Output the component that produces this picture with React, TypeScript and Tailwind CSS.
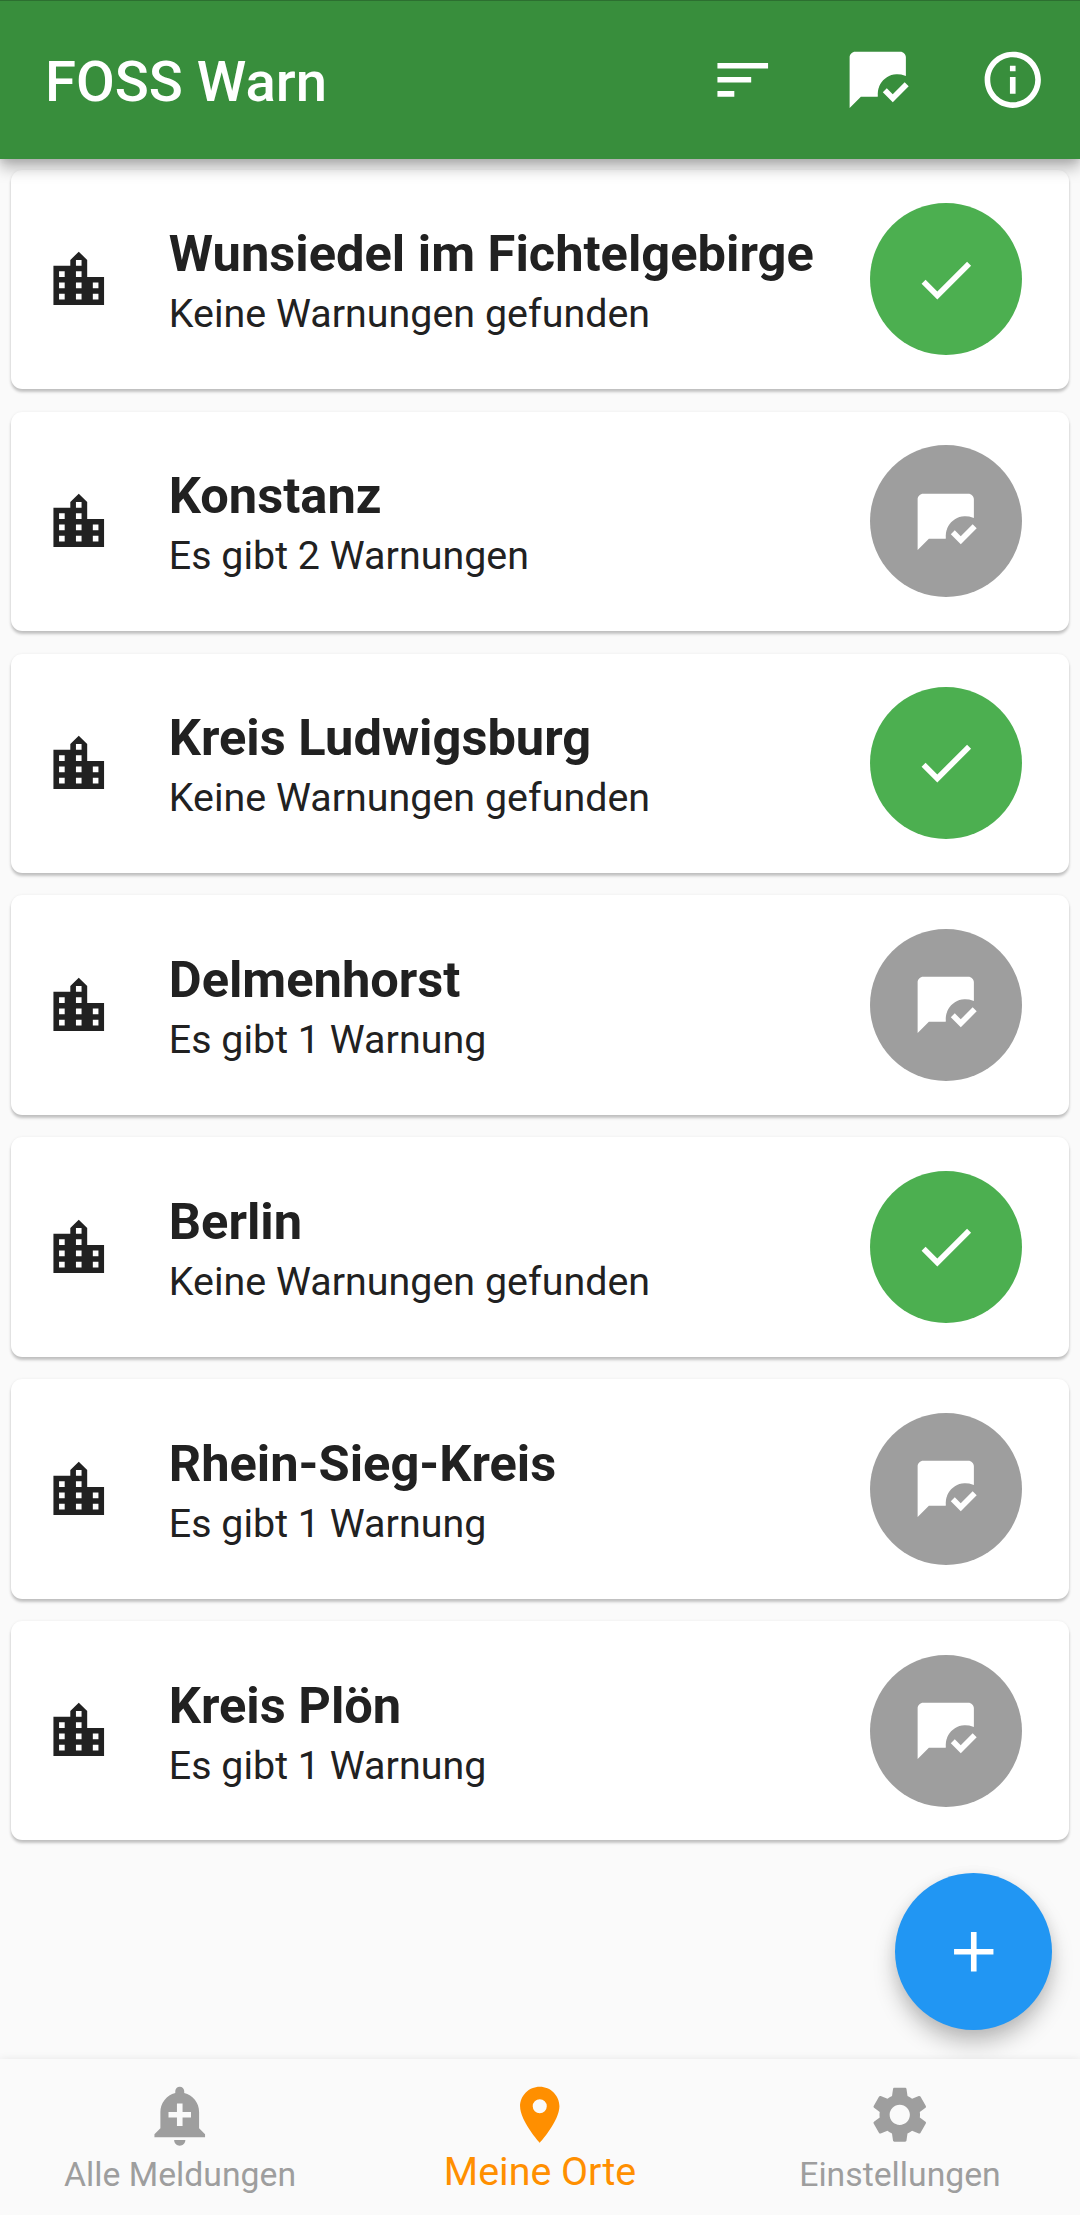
import type { IconType } from "react-icons";
import {
  MdAdd,
  MdAddAlert,
  MdCheck,
  MdInfoOutline,
  MdLocationCity,
  MdMarkChatRead,
  MdPlace,
  MdSettings,
  MdSort,
} from "react-icons/md";

const places = [
  { name: "Wunsiedel im Fichtelgebirge", warnings: 0 },
  { name: "Konstanz", warnings: 2 },
  { name: "Kreis Ludwigsburg", warnings: 0 },
  { name: "Delmenhorst", warnings: 1 },
  { name: "Berlin", warnings: 0 },
  { name: "Rhein-Sieg-Kreis", warnings: 1 },
  { name: "Kreis Plön", warnings: 1 },
];

function warningText(count: number) {
  if (count === 0) return "Keine Warnungen gefunden";
  return count === 1 ? "Es gibt 1 Warnung" : `Es gibt ${count} Warnungen`;
}

function ActionButton({ icon: Icon, label }: { icon: IconType; label: string }) {
  return (
    <button aria-label={label} className="flex size-[135px] items-center justify-center">
      <Icon className="size-[67.5px]" />
    </button>
  );
}

function PlaceCard({ name, warnings }: { name: string; warnings: number }) {
  return (
    <li className="flex h-[219.375px] items-center rounded-[11.25px] bg-white pr-[47px] pl-[33.75px] shadow-[0_3px_3px_rgba(0,0,0,0.22),0_0_3px_rgba(0,0,0,0.06)]">
      <MdLocationCity className="mt-px size-[67.5px] shrink-0" />
      <div className="min-w-0 flex-1 pt-[10.5px] pl-[56.25px] whitespace-nowrap">
        <h2 className="text-[50.625px] leading-[60px] font-bold">{name}</h2>
        <p className="text-[39.375px] leading-[60.5px] tracking-[0.03px]">{warningText(warnings)}</p>
      </div>
      <button
        aria-label={warnings === 0 ? "Keine Warnungen" : "Als gelesen markieren"}
        className={`flex size-[152px] shrink-0 items-center justify-center rounded-full text-white ${
          warnings === 0 ? "bg-[#4caf50]" : "bg-[#9e9e9e]"
        }`}
      >
        {warnings === 0 ? <MdCheck className="size-[67.5px]" /> : <MdMarkChatRead className="size-[67.5px]" />}
      </button>
    </li>
  );
}

function NavItem({ icon: Icon, label, active = false }: { icon: IconType; label: string; active?: boolean }) {
  return (
    <a
      className={`flex flex-1 flex-col items-center pt-[22.5px] whitespace-nowrap ${
        active ? "text-[#ff8f00]" : "text-[#9e9e9e]"
      }`}
    >
      <Icon className="size-[67.5px]" />
      <span className={active ? "text-[39.375px] leading-[46px]" : "pt-[6px] text-[33.75px] leading-[40px]"}>
        {label}
      </span>
    </a>
  );
}

export default function App() {
  return (
    <div className="flex h-[2215px] w-[1080px] flex-col overflow-hidden bg-[#fafafa] font-['Roboto',sans-serif] text-[#212121]">
      <header className="z-10 flex h-[158.5px] shrink-0 items-center border-t border-[#2c6f30] bg-[#388e3c] pl-[45px] text-white shadow-[0_9px_14px_rgba(0,0,0,0.27),0_3px_6px_rgba(0,0,0,0.08)]">
        <h1 className="flex-1 pt-[4px] text-[56.25px] leading-[66px] font-medium">FOSS Warn</h1>
        <ActionButton icon={MdSort} label="Sortieren" />
        <ActionButton icon={MdMarkChatRead} label="Alle als gelesen markieren" />
        <ActionButton icon={MdInfoOutline} label="Info" />
      </header>

      <main className="relative min-h-0 flex-1">
        <ul className="flex flex-col gap-[22.5px] p-[11.25px]">
          {places.map((place) => (
            <PlaceCard key={place.name} {...place} />
          ))}
        </ul>
        <button
          aria-label="Ort hinzufügen"
          className="absolute right-[28px] bottom-[28.5px] flex size-[157.5px] items-center justify-center rounded-full bg-[#2196f3] text-white shadow-[0_14px_22px_rgba(0,0,0,0.22),0_3px_14px_rgba(0,0,0,0.08)]"
        >
          <MdAdd className="size-[67.5px]" />
        </button>
      </main>

      <nav className="z-10 flex h-[156.5px] shrink-0 bg-[#fafafa] shadow-[0_0_8px_rgba(0,0,0,0.08)]">
        <NavItem icon={MdAddAlert} label="Alle Meldungen" />
        <NavItem icon={MdPlace} label="Meine Orte" active />
        <NavItem icon={MdSettings} label="Einstellungen" />
      </nav>
    </div>
  );
}
